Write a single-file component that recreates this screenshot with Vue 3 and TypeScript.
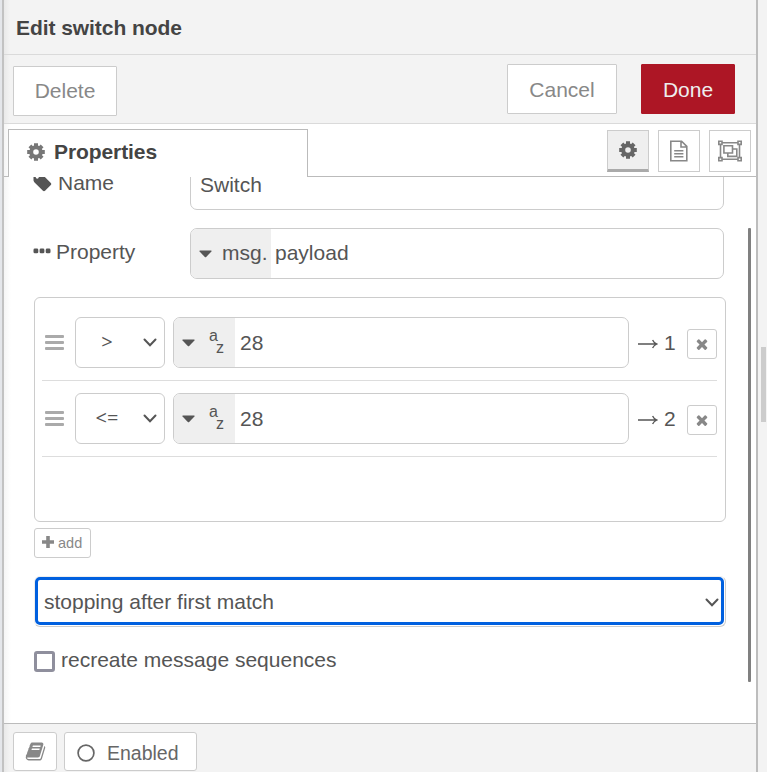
<script setup lang="ts">
import { ref } from 'vue'

interface Rule {
  op: string
  value: string
}

const rules = ref<Rule[]>([
  { op: '>', value: '28' },
  { op: '<=', value: '28' },
])
const recreate = ref(false)

const icons = {
  teeth: 'M9 .2v3.600M9 14.200v3.600M.2 9h3.600M14.200 9h3.600M2.900 2.900l2.400 2.400M12.700 12.700l2.400 2.400M15.100 2.900l-2.400 2.400M5.300 12.700l-2.400 2.400',
  tag: 'M576 448q0-53-37.5-90.5t-90.5-37.5-90.5 37.5-37.5 90.5 37.5 90.5 90.5 37.5 90.5-37.5 37.5-90.5zm1067 576q0 53-37 90l-491 492q-39 37-91 37-53 0-90-37l-715-716q-38-37-64.5-101t-26.5-117v-416q0-52 38-90t90-38h416q53 0 117 26.5t102 64.5l715 714q37 39 37 91z',
  times: 'M1490 1322q0 40-28 68l-136 136q-28 28-68 28t-68-28l-294-294-294 294q-28 28-68 28t-68-28l-136-136q-28-28-28-68t28-68l294-294-294-294q-28-28-28-68t28-68l136-136q28-28 68-28t68 28l294 294 294-294q28-28 68-28t68 28l136 136q28 28 28 68t-28 68l-294 294 294 294q28 28 28 68z',
  book: 'M1703 478q40 57 18 129l-275 906q-19 64-76.5 107.5t-122.5 43.5h-923q-77 0-148.5-53.5t-99.5-131.5q-24-67-2-127 0-4 3-27t4-37q1-8-3-21.5t-3-19.5q2-11 8-21t16.5-23.5 16.5-23.5q23-38 45-91.5t30-91.5q3-10 .5-30t-.5-28q3-11 17-28t17-23q21-36 42-92t25-90q1-9-2.5-32t.5-28q4-13 22-30.5t22-22.5q19-26 42.5-84.5t27.5-96.5q1-8-3-25.5t-2-26.5q2-8 9-18t18-23 17-21q8-12 16.5-30.5t15-35 16-36 19.5-32 26.5-23.5 36-11.5 47.5 5.5l-1 3q38-9 51-9h761q74 0 114 56t18 130l-274 906q-36 119-71.5 153.5t-128.5 34.5h-869q-27 0-38 15-11 16-1 43 24 70 144 70h923q29 0 56-15.5t35-41.5l300-987q7-22 5-57 38 15 59 43zm-1064 2q-4 13 2 22.5t20 9.5h608q13 0 25.5-9.5t16.5-22.5l21-64q4-13-2-22.5t-20-9.5h-608q-13 0-25.5 9.5t-16.5 22.5zm-83 256q-4 13 2 22.5t20 9.5h608q13 0 25.5-9.5t16.5-22.5l21-64q4-13-2-22.5t-20-9.5h-608q-13 0-25.5 9.5t-16.5 22.5z',
}

function addRule() {
  rules.value.push({ op: '==', value: '' })
}
function removeRule(index: number) {
  rules.value.splice(index, 1)
}
</script>

<template>
  <div class="page">
    <div class="gutter-left"></div>
    <main class="tray">
      <header class="header">Edit switch node</header>

      <div class="toolbar">
        <button class="btn delete">Delete</button>
        <button class="btn cancel">Cancel</button>
        <button class="btn done">Done</button>
      </div>

      <nav class="tabs">
        <div class="tab">
          <svg class="cog" width="18" height="18" viewBox="0 0 18 18">
            <circle cx="9" cy="9" r="4.800" /><path :d="icons.teeth" />
          </svg>
          <span>Properties</span>
        </div>
        <div class="tab-actions">
          <button class="tab-btn active">
            <svg class="cog" width="18" height="18" viewBox="0 0 18 18">
              <circle cx="9" cy="9" r="4.800" /><path :d="icons.teeth" />
            </svg>
          </button>
          <button class="tab-btn">
            <svg class="line" width="20" height="22" viewBox="0 0 20 22">
              <path d="M1.800 1.200h10.800l5.200 5.200v14.400H1.800zM12 1.400v5.600h5.600M5.200 10.800h9.200M5.200 13.800h9.200M5.200 16.800h9.200" />
            </svg>
          </button>
          <button class="tab-btn">
            <svg class="line" width="24" height="22" viewBox="0 0 24 22">
              <path d="M3.500 2.800h17M3.500 19.200h17M2.500 3.500v15M21.500 3.500v15" />
              <path class="knob" d="M.8 1.200h3.200v3.200H.8zM20 1.200h3.200v3.200H20zM.8 17.600h3.200v3.200H.8zM20 17.600h3.200v3.200H20z" />
              <path d="M5.900 5.800h8.600v7.200H5.900zM14.500 9h4.300v7.400H9.800V13" />
            </svg>
          </button>
        </div>
      </nav>

      <section class="body">
        <div class="form">
          <div class="form-row name-row">
            <label class="label">
              <svg class="tag" width="21" height="21" viewBox="0 0 1792 1792"><path :d="icons.tag" /></svg>
              <span>Name</span>
            </label>
            <div class="field name-field">Switch</div>
          </div>

          <div class="form-row property-row">
            <label class="label">
              <svg class="dots" width="18" height="6" viewBox="0 0 18 6">
                <rect x="0.500" y="0.500" width="4.800" height="4.800" rx="1.400" />
                <rect x="6.600" y="0.500" width="4.800" height="4.800" rx="1.400" />
                <rect x="12.700" y="0.500" width="4.800" height="4.800" rx="1.400" />
              </svg>
              <span>Property</span>
            </label>
            <div class="field typed">
              <span class="prefix msg">
                <svg class="caret" width="13" height="8" viewBox="0 0 13 8"><path d="M1 .5h11q1 .2.4 1L7.200 7q-.7.6-1.400 0L.6 1.500q-.6-.8.4-1z" /></svg>
                <span>msg.</span>
              </span>
              <span class="typed-value">payload</span>
            </div>
          </div>

          <div class="rules">
            <div v-for="(rule, i) in rules" :key="i" class="rule">
              <span class="handle"><i></i><i></i><i></i></span>
              <div class="select op">
                <span class="op-text">{{ rule.op }}</span>
                <svg class="chev" width="14" height="9" viewBox="0 0 14 9"><path d="M1.500 1.500l5.500 5.700 5.500-5.700" /></svg>
              </div>
              <div class="field typed rule-value">
                <span class="prefix str">
                  <svg class="caret" width="13" height="8" viewBox="0 0 13 8"><path d="M1 .5h11q1 .2.4 1L7.200 7q-.7.6-1.400 0L.6 1.500q-.6-.8.4-1z" /></svg>
                  <span class="az"><span>a</span><span>z</span></span>
                </span>
                <span class="typed-value">{{ rule.value }}</span>
              </div>
              <span class="output">
                <svg class="arrow" width="20" height="10" viewBox="0 0 20 10"><path d="M0 5h19M14.600 .9q1.200 3 4.400 4.100-3.200 1.100-4.400 4.100" /></svg>
                <span>{{ i + 1 }}</span>
              </span>
              <button class="remove" @click="removeRule(i)">
                <svg width="16" height="16" viewBox="0 0 1792 1792"><path :d="icons.times" /></svg>
              </button>
            </div>
          </div>

          <button class="add" @click="addRule">
            <svg class="plus" width="12" height="12" viewBox="0 0 12 12"><path d="M4.200 0h3.600v4.200H12v3.600H7.800V12H4.200V7.800H0V4.200h4.200z" /></svg>
            <span>add</span>
          </button>

          <div class="select mode">
            <div class="ring">
              <span class="mode-text">stopping after first match</span>
              <svg class="chev" width="14" height="9" viewBox="0 0 14 9"><path d="M1.500 1.500l5.500 5.700 5.500-5.700" /></svg>
            </div>
          </div>

          <label class="check">
            <input v-model="recreate" type="checkbox" />
            <span>recreate message sequences</span>
          </label>
        </div>
        <div class="scrollbar"></div>
      </section>

      <footer class="footer">
        <button class="foot-btn info">
          <svg width="21" height="21" viewBox="0 0 1792 1792"><path :d="icons.book" /></svg>
        </button>
        <button class="foot-btn enabled">
          <svg class="ring-icon" width="18" height="18" viewBox="0 0 18 18"><circle cx="9" cy="9" r="7.900" /></svg>
          <span>Enabled</span>
        </button>
      </footer>
    </main>
    <aside class="gutter-right"><div class="thumb"></div></aside>
  </div>
</template>

<style>
body {
  background: #f3f3f3;
  overflow: hidden;
}
</style>

<style scoped>
.page {
  display: flex;
  width: 767px;
  height: 772px;
  overflow: hidden;
  font: 21px/30px "Liberation Sans", Arial, sans-serif;
  color: #555;
}
.page * {
  box-sizing: border-box;
}
svg {
  display: block;
  flex: none;
  fill: currentColor;
}
button {
  font: inherit;
  padding: 0;
  margin: 0;
  flex: none;
}
.gutter-left {
  width: 2px;
  background: #e4e6ea;
}
.tray {
  width: 756px;
  display: flex;
  flex-direction: column;
  border-left: 2px solid #c2c2c2;
  border-right: 2px solid #bdbdbd;
  background: linear-gradient(to right, #f5f5f5, #fff 7px);
}
.header {
  height: 55px;
  flex: none;
  padding: 13px 12px 0;
  border-bottom: 1px solid #dadada;
  background: linear-gradient(to right, #e9e9e9, #f3f3f3 6px);
  color: #444;
  font-weight: bold;
  letter-spacing: -0.06px;
}
.toolbar {
  height: 69px;
  flex: none;
  display: flex;
  padding: 9px 21px 0 9px;
  border-bottom: 1px solid #dadada;
  background: linear-gradient(to right, #e9e9e9, #f3f3f3 6px);
}
.btn {
  height: 50px;
  border: 1px solid #ccc;
  border-radius: 1px;
  background: #fff;
  color: #888;
}
.delete {
  width: 104px;
  margin: 2px auto 0 0;
}
.cancel {
  width: 110px;
  margin-right: 24px;
  padding-top: 2px;
}
.done {
  width: 94px;
  padding-top: 2px;
  border-color: #ad1625;
  background: #ad1625;
  color: #eee;
}
.tabs {
  height: 53px;
  flex: none;
  display: flex;
  justify-content: space-between;
  padding: 5px 5px 0 4px;
  border-bottom: 1px solid #bbb;
}
.tab {
  width: 300px;
  height: 48px;
  display: flex;
  align-items: center;
  gap: 9px;
  padding: 0 0 3px 18px;
  border: 1px solid #bbb;
  border-bottom: 0;
  background: #fff;
  color: #444;
  font-weight: bold;
  letter-spacing: -0.08px;
}
.cog {
  fill: none;
  stroke: currentColor;
  stroke-width: 4;
}
.tab .cog {
  color: #777;
  margin-top: -1px;
}
.tab-actions {
  display: flex;
  gap: 9px;
  padding-top: 1px;
}
.tab-btn {
  width: 42px;
  height: 42px;
  display: flex;
  align-items: center;
  justify-content: center;
  border: 1px solid #ccc;
  background: #fff;
  color: #888;
}
.tab-btn.active {
  border-bottom: 3px solid #aaa;
  background: #efefef;
  color: #666;
}
.line {
  fill: none;
  stroke: currentColor;
  stroke-width: 1.600;
}
.knob {
  fill: #fff;
}
.body {
  flex: 1;
  min-height: 0;
  display: flex;
  justify-content: space-between;
  overflow: hidden;
  padding-right: 5px;
}
.form {
  width: 692px;
  margin: -18px 0 0 30px;
}
.form-row {
  display: flex;
  width: 690px;
}
.label {
  width: 156px;
  display: flex;
  align-items: center;
}
.name-row {
  height: 51px;
}
.name-row .label {
  height: 48px;
}
.tag {
  margin: -1px 5px 0 -2px;
}
.dots {
  margin: -3px 5px 0 -1px;
}
.field {
  height: 51px;
  display: flex;
  align-items: center;
  border: 1px solid #ccc;
  border-radius: 7px;
  background: #fff;
  overflow: hidden;
}
.name-field {
  width: 534px;
  padding-left: 9px;
}
.property-row {
  margin-top: 18px;
}
.property-row .label {
  height: 48px;
}
.property-row .field {
  width: 534px;
}
.prefix {
  height: 100%;
  display: flex;
  align-items: center;
  flex: none;
  background: #efefef;
}
.msg {
  width: 80px;
  padding-left: 8px;
  gap: 10px;
}
.msg span,
.msg + .typed-value {
  padding-bottom: 2px;
}
.str {
  width: 61px;
  padding-left: 8px;
  gap: 14px;
}
.caret {
  margin-top: 1px;
}
.typed-value {
  padding-left: 5px;
}
.msg + .typed-value {
  padding-left: 4px;
}
.az {
  display: flex;
  height: 24px;
  font-size: 16px;
  line-height: 12px;
}
.az span:first-child {
  margin-top: -1px;
}
.az span:last-child {
  margin: 11px 0 0 -2px;
}
.rules {
  width: 692px;
  height: 225px;
  margin-top: 18px;
  padding: 7px 8px 7px 7px;
  border: 1px solid #ccc;
  border-radius: 6px;
  background: #fff;
}
.rule {
  height: 76px;
  display: flex;
  align-items: center;
  border-bottom: 1px solid #ddd;
}
.handle {
  width: 19px;
  flex: none;
  margin: 0 11px 0 3px;
  display: grid;
  gap: 3px;
}
.handle i {
  height: 3px;
  border-radius: 1px;
  background: #aaa;
}
.select {
  display: flex;
  align-items: center;
  flex: none;
  border: 1px solid #ccc;
  border-radius: 6px;
  background: #fff;
}
.chev {
  fill: none;
  stroke: #555;
  stroke-width: 2;
  stroke-linecap: round;
}
.op {
  width: 90px;
  height: 51px;
  margin-right: 8px;
}
.op-text {
  width: 62px;
  margin-right: 5px;
  padding-bottom: 1px;
  text-align: center;
  font-family: "Open Sans", sans-serif;
  font-size: 20px;
  font-weight: 500;
}
.rule-value {
  width: 456px;
  flex: none;
}
.output {
  width: 58px;
  flex: none;
  padding-left: 9px;
  display: flex;
  align-items: center;
  gap: 6px;
}
.arrow {
  fill: none;
  stroke: #555;
  stroke-width: 1.300;
  margin-top: 2px;
}
.remove {
  width: 30px;
  height: 30px;
  margin-top: 2px;
  display: flex;
  align-items: center;
  justify-content: center;
  border: 1px solid #ccc;
  border-radius: 3px;
  background: #fff;
  color: #888;
}
.add {
  width: 57px;
  height: 30px;
  display: flex;
  align-items: center;
  gap: 4px;
  margin-top: 6px;
  padding: 0 0 1px 7px;
  border: 1px solid #ccc;
  border-radius: 3px;
  background: #fff;
  color: #888;
  font-size: 14.500px;
}
.plus {
  margin-top: -1px;
}
.mode {
  width: 692px;
  height: 51px;
  margin-top: 18px;
  padding: 0 1px 1px 0;
  border-top-color: #eee;
  border-left-color: #eee;
}
.ring {
  width: 100%;
  height: 100%;
  display: flex;
  align-items: center;
  justify-content: space-between;
  padding: 0 2px 0 6px;
  border: 3px solid #0060df;
  border-radius: 5px;
}
.mode-text {
  padding-top: 2px;
}
.mode .chev {
  margin-top: 2px;
}
.check {
  display: flex;
  align-items: center;
  gap: 6px;
  margin-top: 18px;
}
.check input {
  appearance: none;
  width: 21px;
  height: 21px;
  margin: 3px 0 0;
  border: 3px solid #8f8f9d;
  border-radius: 3px;
  background: #fff;
}
.scrollbar {
  width: 3px;
  height: 454px;
  margin-top: 51px;
  border-radius: 1px;
  background: #808080;
}
.footer {
  height: 49px;
  flex: none;
  display: flex;
  gap: 7px;
  padding: 8px 9px 0;
  border-top: 1px solid #bbb;
  background: linear-gradient(to right, #e9e9e9, #f3f3f3 6px);
}
.foot-btn {
  height: 39px;
  display: flex;
  align-items: center;
  border: 1px solid #ccc;
  border-radius: 3px;
  background: #fff;
}
.info {
  width: 44px;
  justify-content: center;
  color: #888;
}
.enabled {
  width: 133px;
  padding: 2px 0 0 12px;
  gap: 12px;
  color: #666;
  font-size: 19.500px;
}
.ring-icon {
  fill: none;
  stroke: #666;
  stroke-width: 1.700;
}
.gutter-right {
  flex: 1;
  padding: 347px 0 0 3px;
  background: #f3f3f3;
}
.thumb {
  width: 5px;
  height: 75px;
  background: #ccc;
}
</style>
